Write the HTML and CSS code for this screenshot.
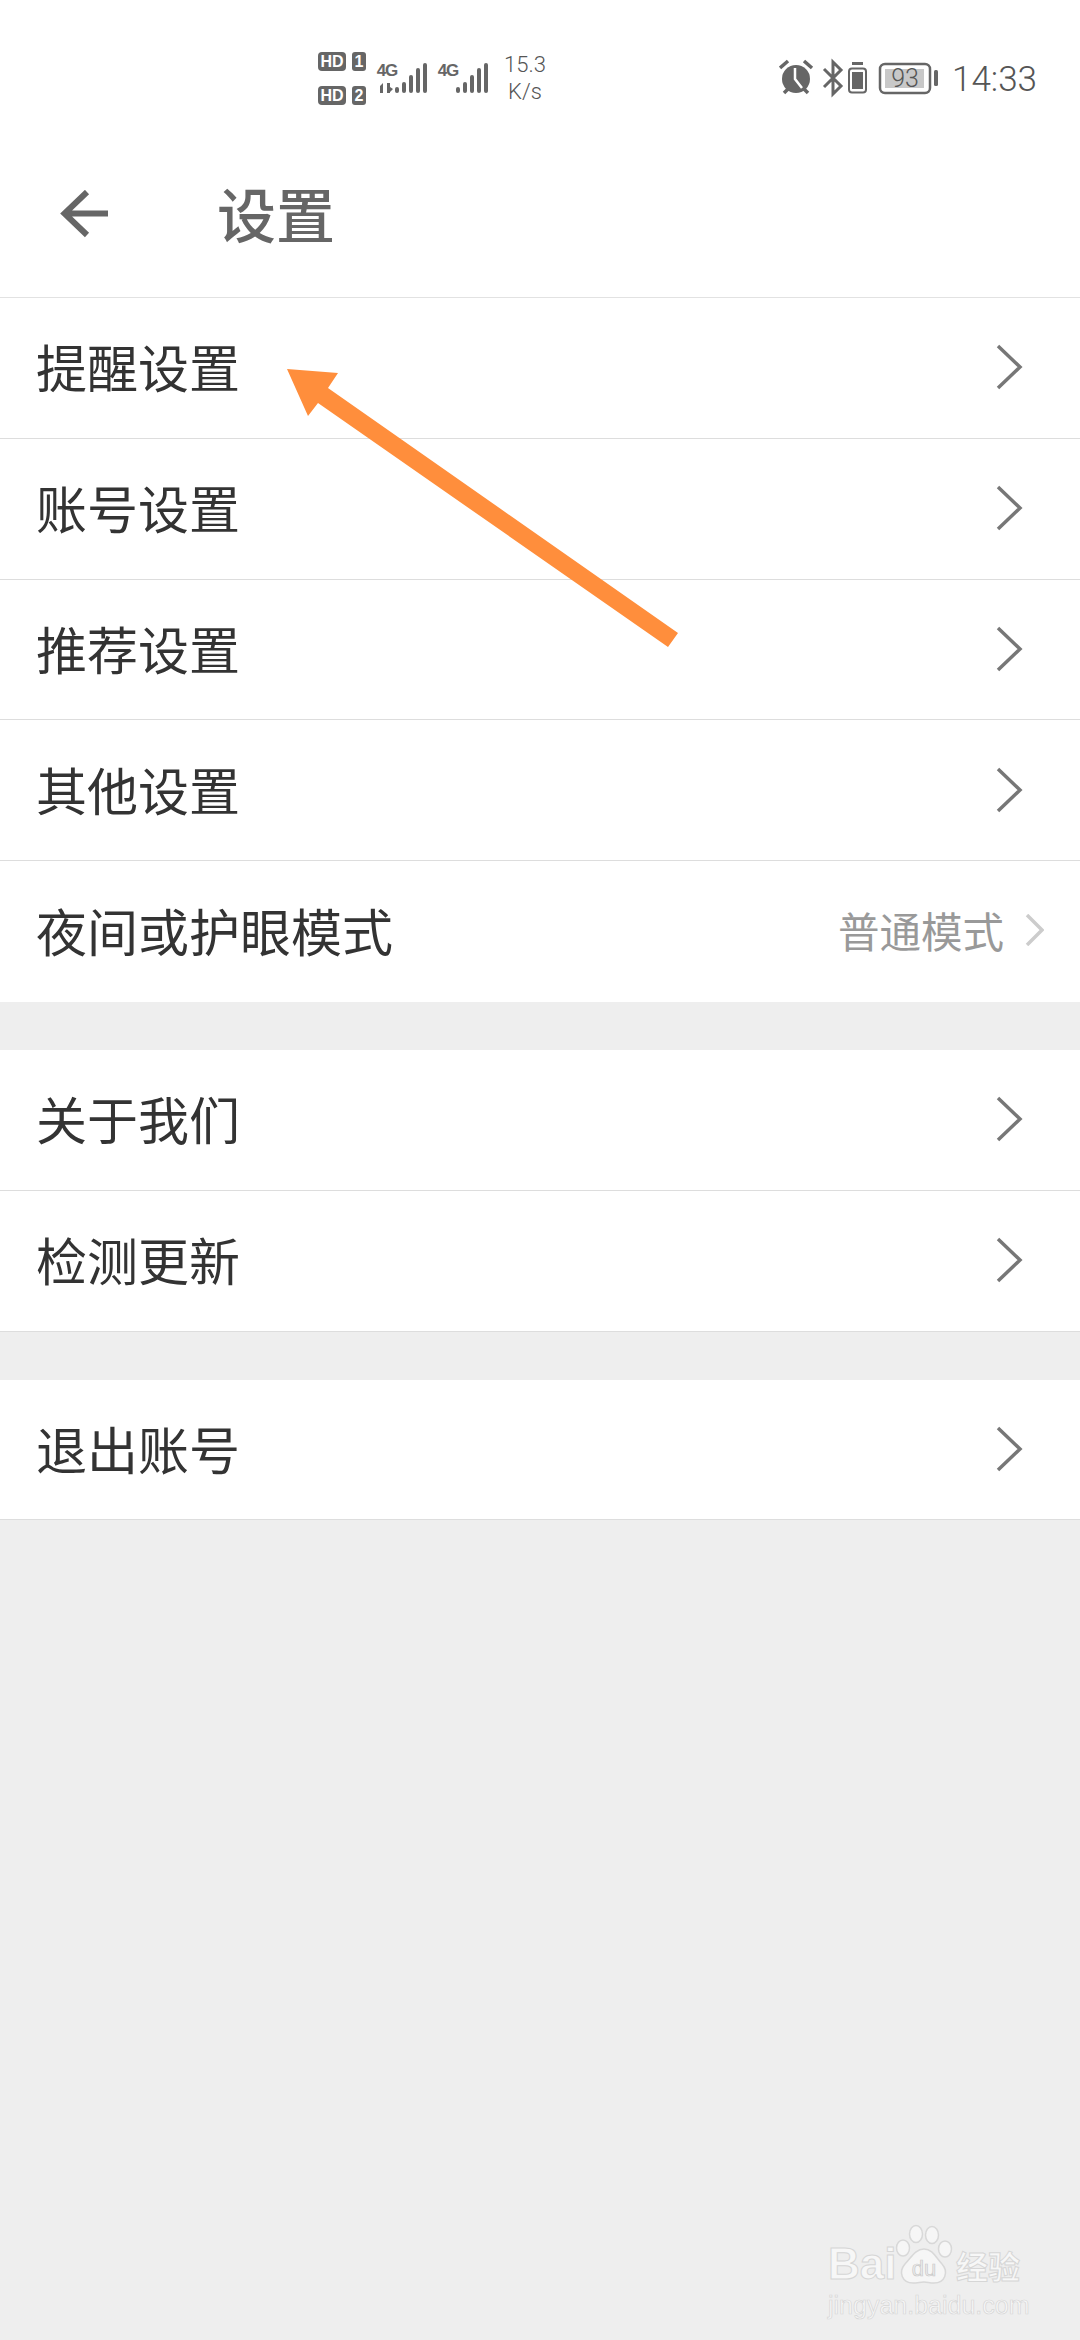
FILE: index.html
```html
<!DOCTYPE html>
<html lang="zh-CN">
<head>
  <meta charset="UTF-8" />
  <title>设置</title>
  <link rel="stylesheet" href="styles.css">
</head>
<body>
<div class="page">

  <!-- 状态栏 -->
  <div class="status-bar">
    <svg class="sim-icons" width="172" height="60" viewBox="318 48 172 60">
      <g fill="#666">
        <rect x="318" y="52" width="28" height="19" rx="4" />
        <rect x="352" y="52" width="14" height="19" rx="3" />
        <rect x="318" y="86" width="28" height="19" rx="4" />
        <rect x="352" y="86" width="14" height="19" rx="3" />
        <!-- 卡1信号 -->
        <path d="M380 86l3-3v10h-3zM387 83h3v4l3 2-3 3v1h-3z" />
        <rect x="395" y="87" width="4" height="6" rx="2" />
        <rect x="402" y="82" width="4" height="11" rx="2" />
        <rect x="409" y="75" width="4" height="18" rx="2" />
        <rect x="416" y="68" width="4" height="25" rx="2" />
        <rect x="423" y="63" width="4" height="30" rx="2" />
        <!-- 卡2信号 -->
        <rect x="456" y="87" width="4" height="6" rx="2" />
        <rect x="463" y="82" width="4" height="11" rx="2" />
        <rect x="470" y="75" width="4" height="18" rx="2" />
        <rect x="477" y="68" width="4" height="25" rx="2" />
        <rect x="484" y="63" width="4" height="30" rx="2" />
      </g>
      <g class="badge-text" fill="#fff">
        <text x="332" y="67" text-anchor="middle">HD</text>
        <text x="359" y="67" text-anchor="middle">1</text>
        <text x="332" y="101" text-anchor="middle">HD</text>
        <text x="359" y="101" text-anchor="middle">2</text>
      </g>
      <g class="net-text" fill="#666">
        <text x="387" y="76" text-anchor="middle">4G</text>
        <text x="448" y="76" text-anchor="middle">4G</text>
      </g>
    </svg>
    <div class="speed">15.3<br>K/s</div>
    <div class="status-right">
      <svg width="162" height="56" viewBox="780 50 162 56">
        <!-- 闹钟 -->
        <circle cx="797" cy="79" r="14" fill="#666" />
        <path d="M781 68l8-7M813 68l-8-7M785 93l4-4M809 93l-4-4" stroke="#666" stroke-width="3.5" fill="none" />
        <path d="M796 68v11l7 9" stroke="#fff" stroke-width="2.5" fill="none" />
        <!-- 蓝牙 -->
        <path d="M825 69l17 17-8 8V62l8 8-17 17" stroke="#666" stroke-width="3" fill="none" />
        <!-- 耳机电量 -->
        <rect x="853" y="62" width="11" height="3" fill="#666" />
        <rect x="850" y="68.500" width="17" height="24" rx="3" fill="none" stroke="#666" stroke-width="2" />
        <rect x="853" y="72" width="11" height="17" fill="#666" />
        <!-- 电池 -->
        <rect x="881" y="64" width="50" height="29" rx="5" fill="none" stroke="#666" stroke-width="2.500" />
        <rect x="886" y="69" width="39" height="19" fill="#c8c8c8" />
        <rect x="935" y="70" width="4" height="16" rx="1.500" fill="#666" />
        <text class="battery-num" x="906" y="87" text-anchor="middle" fill="#555">93</text>
      </svg>
      <span class="clock">14:33</span>
    </div>
  </div>

  <!-- 标题栏 -->
  <div class="nav-bar">
    <svg class="back-icon" width="48" height="48" viewBox="0 0 48 48">
      <path d="M48 23.500H5M27 2L4.500 23.500 27 45" stroke="#666" stroke-width="6" fill="none" />
    </svg>
    <h1 class="nav-title">设置</h1>
  </div>

  <div class="group">
    <div class="row"><span>提醒设置</span><svg class="chevron" width="27" height="46" viewBox="0 0 27 46"><path d="M2 2l22 21L2 44" /></svg></div>
    <div class="row"><span>账号设置</span><svg class="chevron" width="27" height="46" viewBox="0 0 27 46"><path d="M2 2l22 21L2 44" /></svg></div>
    <div class="row"><span>推荐设置</span><svg class="chevron" width="27" height="46" viewBox="0 0 27 46"><path d="M2 2l22 21L2 44" /></svg></div>
    <div class="row"><span>其他设置</span><svg class="chevron" width="27" height="46" viewBox="0 0 27 46"><path d="M2 2l22 21L2 44" /></svg></div>
    <div class="row row-last">
      <span>夜间或护眼模式</span>
      <div class="row-value">
        <span>普通模式</span>
        <svg class="chevron-light" width="19" height="32" viewBox="0 0 19 32"><path d="M2 1l15 15L2 31" /></svg>
      </div>
    </div>
  </div>

  <div class="group">
    <div class="row"><span>关于我们</span><svg class="chevron" width="27" height="46" viewBox="0 0 27 46"><path d="M2 2l22 21L2 44" /></svg></div>
    <div class="row"><span>检测更新</span><svg class="chevron" width="27" height="46" viewBox="0 0 27 46"><path d="M2 2l22 21L2 44" /></svg></div>
  </div>

  <div class="group">
    <div class="row"><span>退出账号</span><svg class="chevron" width="27" height="46" viewBox="0 0 27 46"><path d="M2 2l22 21L2 44" /></svg></div>
  </div>

  <!-- 橙色标注箭头 -->
  <svg class="mark-arrow" width="400" height="285" viewBox="285 366 400 285">
    <polygon points="287,369 338,373 328,388 678,633 668,647 318,403 308,416" fill="#ff8e3c" />
  </svg>

  <!-- 水印 -->
  <div class="watermark">
    <div class="wm-top">
      <span class="wm-bai">Bai</span>
      <svg class="wm-paw" width="58" height="62" viewBox="0 0 58 62">
        <g fill="#f6f6f6" stroke="#d8d8d8" stroke-width="1.500">
          <ellipse cx="8" cy="24" rx="6.500" ry="8" />
          <ellipse cx="21" cy="10" rx="6.500" ry="8.500" />
          <ellipse cx="37" cy="11" rx="6.500" ry="8.500" />
          <ellipse cx="50" cy="25" rx="6.500" ry="8" />
          <path d="M29 25c9 0 12 9 18 15 7 8 3 19-8 19-4 0-7-1-10-1s-7 1-11 1C7 59 3 48 10 40c6-6 10-15 19-15z" />
        </g>
        <text class="wm-du" x="29" y="52" text-anchor="middle">du</text>
      </svg>
      <span class="wm-cn">经验</span>
    </div>
    <div class="wm-url">jingyan.baidu.com</div>
  </div>

</div>
</body>
</html>
```

FILE: styles.css
```css
* {
  box-sizing: border-box;
}

html, body {
  margin: 0;
  padding: 0;
}

body {
  font-family: "Noto Sans CJK SC", "Noto Sans", sans-serif;
  background: #eee;
}

.page {
  position: relative;
  width: 1080px;
  height: 2340px;
  overflow: hidden;
  background: #eee;
}

.status-bar {
  display: flex;
  align-items: center;
  height: 130px;
  padding: 26px 43px 0 318px;
  background: #fff;
}

.sim-icons {
  flex: none;
}

.badge-text text {
  font-family: "Liberation Sans", sans-serif;
  font-size: 16px;
  font-weight: bold;
}

.net-text text {
  font-family: "Liberation Sans", sans-serif;
  font-size: 17px;
  font-weight: bold;
  letter-spacing: -1px;
}

.speed {
  width: 58px;
  margin-left: 6px;
  font-family: Roboto, sans-serif;
  font-size: 22px;
  font-weight: 300;
  line-height: 27px;
  text-align: center;
  color: #555;
}

.status-right {
  display: flex;
  align-items: center;
  gap: 11px;
  margin-left: auto;
}

.battery-num {
  font-family: Roboto, sans-serif;
  font-size: 25px;
  font-weight: 300;
}

.clock {
  padding-top: 2px;
  font-family: Roboto, sans-serif;
  font-size: 35px;
  font-weight: 300;
  color: #555;
}

.nav-bar {
  display: flex;
  align-items: center;
  height: 168px;
  padding: 0 0 0 60px;
  border-bottom: 1px solid #e2e2e2;
  background: #fff;
}

.back-icon {
  margin-top: 1px;
}

.nav-title {
  margin: 0 0 3px 109px;
  font-size: 59px;
  font-weight: 500;
  line-height: 1;
  color: #666;
}

.group {
  margin-bottom: 48px;
  background: #fff;
}

.row {
  display: flex;
  align-items: center;
  justify-content: space-between;
  height: 140.800px;
  padding: 0 57px 3px 36px;
  border-bottom: 1px solid #ddd;
  font-size: 51px;
  color: #333;
}

.row > svg {
  margin-top: 2px;
}

.row-last {
  padding-right: 36px;
  border-bottom: none;
}

.row-value {
  display: flex;
  align-items: center;
  gap: 21px;
  font-size: 41.500px;
  color: #999;
}

.chevron path {
  fill: none;
  stroke: #777;
  stroke-width: 3.500;
}

.chevron-light path {
  fill: none;
  stroke: #ccc;
  stroke-width: 3.500;
}

.mark-arrow {
  position: absolute;
  left: 285px;
  top: 366px;
}

.watermark {
  position: absolute;
  left: 828px;
  top: 2224px;
  width: 196px;
  color: #f7f7f7;
}

.wm-top {
  display: flex;
  align-items: flex-end;
}

.wm-bai {
  width: 67px;
  font-family: "Liberation Sans", sans-serif;
  font-size: 44px;
  font-weight: bold;
  line-height: 44px;
  -webkit-text-stroke: 1px #d6d6d6;
}

.wm-paw {
  flex: none;
}

.wm-du {
  font-family: "Liberation Sans", sans-serif;
  font-size: 22px;
  fill: #eee;
  stroke: #c9c9c9;
  stroke-width: 0.700;
}

.wm-cn {
  margin-left: 3px;
  font-size: 32px;
  font-weight: 700;
  line-height: 42px;
  white-space: nowrap;
  -webkit-text-stroke: 1px #d6d6d6;
}

.wm-url {
  margin-top: 5px;
  font-family: "Liberation Sans", sans-serif;
  font-size: 25px;
  line-height: 28px;
  white-space: nowrap;
  -webkit-text-stroke: 0.700px #d6d6d6;
}
```
